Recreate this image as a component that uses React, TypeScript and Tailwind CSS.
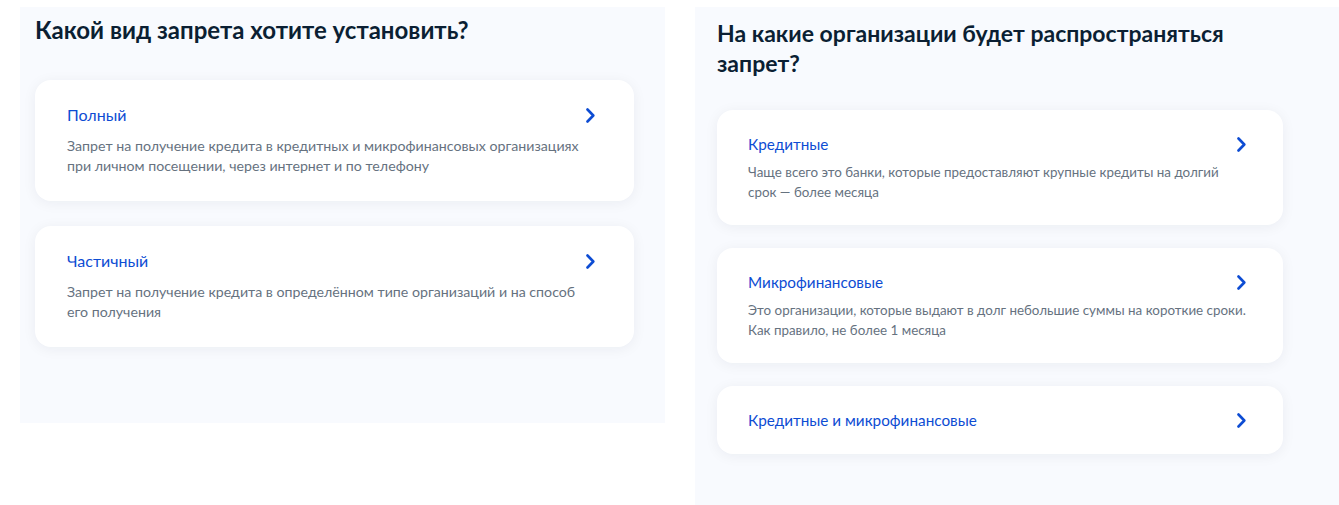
import React from "react";

const Chevron = ({ w = 9, h = 15 }: { w?: number; h?: number }) => (
  <svg width={w} height={h} viewBox="0 0 9 15" fill="none" className="shrink-0">
    <path d="M1.5 1.5L7.3 7.5L1.5 13.5" stroke="#0d4cd3" strokeWidth="2.6" strokeLinecap="round" strokeLinejoin="round" />
  </svg>
);

type Item = { title: string; desc?: string[] };

const leftItems: Item[] = [
  {
    title: "Полный",
    desc: [
      "Запрет на получение кредита в кредитных и микрофинансовых организациях",
      "при личном посещении, через интернет и по телефону",
    ],
  },
  {
    title: "Частичный",
    desc: [
      "Запрет на получение кредита в определённом типе организаций и на способ",
      "его получения",
    ],
  },
];

const rightItems: Item[] = [
  {
    title: "Кредитные",
    desc: [
      "Чаще всего это банки, которые предоставляют крупные кредиты на долгий",
      "срок — более месяца",
    ],
  },
  {
    title: "Микрофинансовые",
    desc: [
      "Это организации, которые выдают в долг небольшие суммы на короткие сроки.",
      "Как правило, не более 1 месяца",
    ],
  },
  { title: "Кредитные и микрофинансовые" },
];

export default function App() {
  return (
    <div
      className="w-[1339px] h-[505px] bg-white flex items-start overflow-hidden"
      style={{ fontFamily: "Lato, 'Noto Sans', sans-serif" }}
    >
      {/* Left panel */}
      <div className="ml-[20px] mt-[7px] w-[645px] h-[416px] bg-[#f8fafe] pl-[15px] pr-[31px] pt-[8px]">
        <h2 className="text-[24px] leading-[30px] font-bold text-[#0b1f33]">
          Какой вид запрета хотите установить?
        </h2>
        <div className="mt-[35px] flex flex-col gap-[25px]">
          {leftItems.map((it) => (
            <div
              key={it.title}
              className="bg-white rounded-[16px] pl-[32px] pr-[39px] pt-[24px] pb-[25px] shadow-[0_2px_14px_rgba(11,31,51,0.06)]"
            >
              <div className="flex items-center justify-between h-[22px]">
                <span className="text-[16px] text-[#0d4cd3]">{it.title}</span>
                <Chevron />
              </div>
              {it.desc && (
                <div className="mt-[10px] text-[14.2px] leading-[20px] text-[#66727f]">
                  {it.desc.map((d) => (
                    <div key={d}>{d}</div>
                  ))}
                </div>
              )}
            </div>
          ))}
        </div>
      </div>

      {/* Right panel */}
      <div className="ml-[30px] mt-[7px] w-[644px] h-[498px] bg-[#f8fafe] pl-[22px] pr-[56px] pt-[11px]">
        <h2 className="text-[23px] leading-[30px] font-bold text-[#0b1f33]">
          На какие организации будет распространяться запрет?
        </h2>
        <div className="mt-[32px] flex flex-col gap-[23px]">
          {rightItems.map((it) => (
            <div
              key={it.title}
              className={`bg-white rounded-[16px] pl-[31px] pr-[37px] pt-[24px] shadow-[0_2px_14px_rgba(11,31,51,0.06)] ${
                it.desc ? "pb-[23px]" : "pb-[24px]"
              }`}
            >
              <div className="flex items-center justify-between h-[20px]">
                <span className="text-[15.3px] text-[#0d4cd3]">{it.title}</span>
                <Chevron w={9} h={15} />
              </div>
              {it.desc && (
                <div className="mt-[8px] text-[13.4px] leading-[20px] text-[#66727f]">
                  {it.desc.map((d) => (
                    <div key={d}>{d}</div>
                  ))}
                </div>
              )}
            </div>
          ))}
        </div>
      </div>
    </div>
  );
}
